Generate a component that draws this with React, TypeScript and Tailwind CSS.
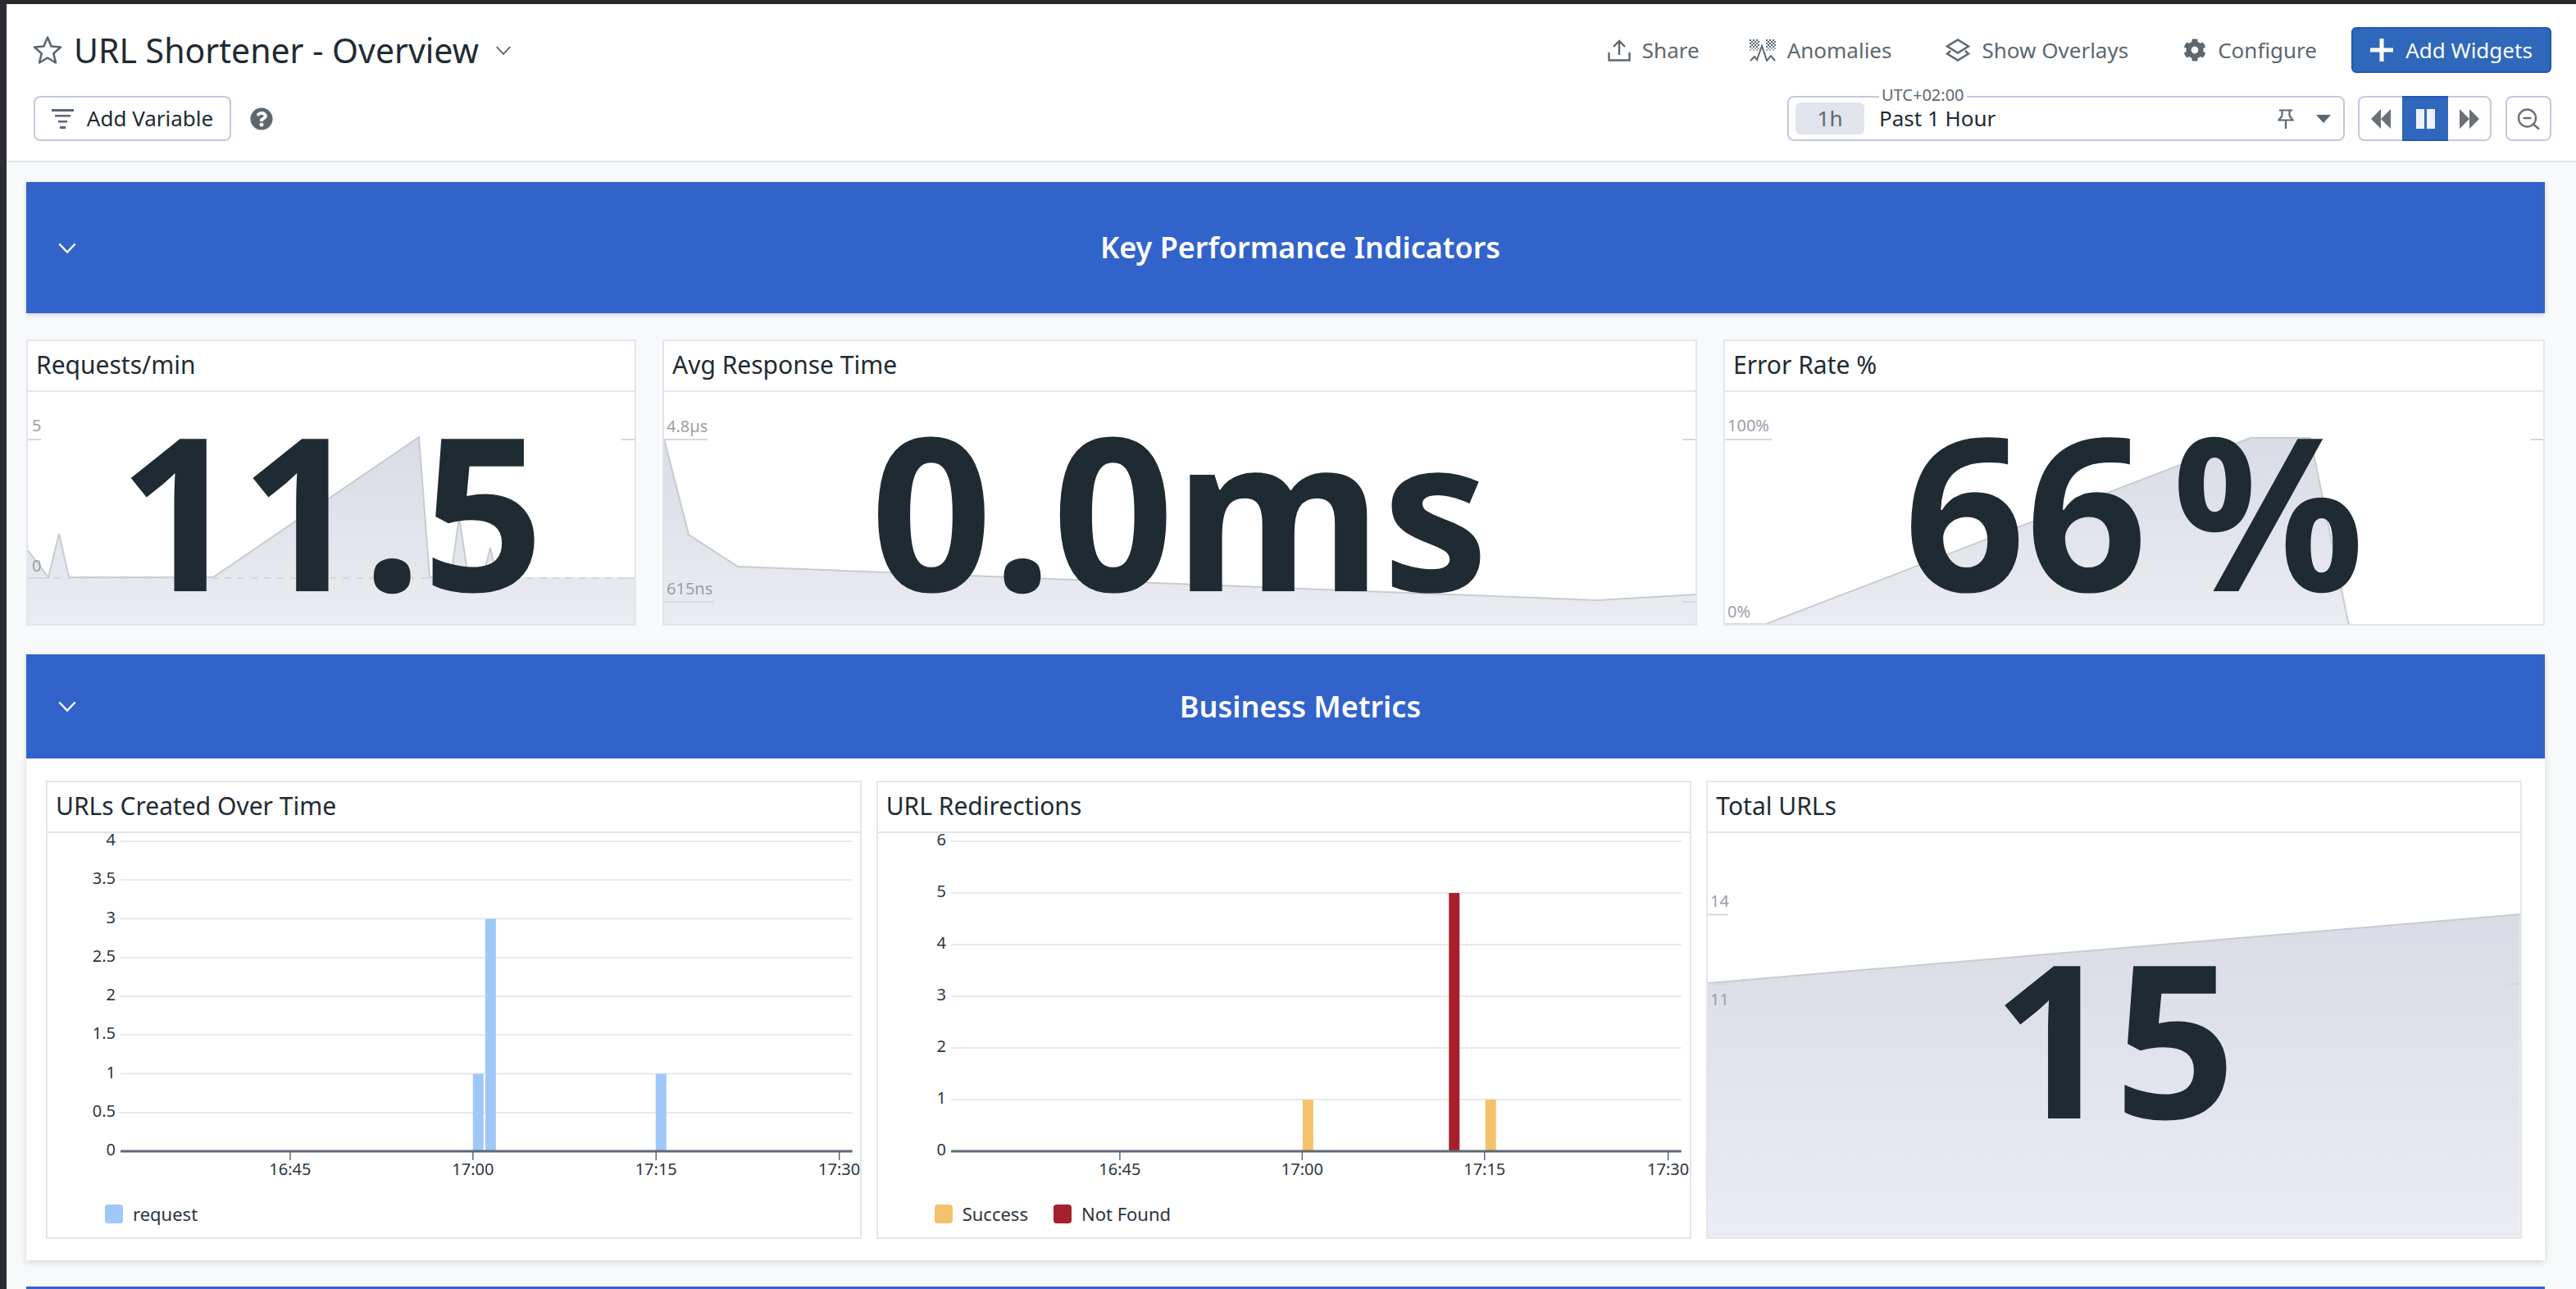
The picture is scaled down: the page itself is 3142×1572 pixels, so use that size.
import React from "react";
import { FaCog, FaQuestionCircle } from "react-icons/fa";

const Chevron = ({ className }: { className: string }) => (
  <svg viewBox="0 0 24 14" className={className} fill="none" stroke="currentColor" strokeWidth="2.4">
    <path d="M1.5 1.5 12 12.5 22.5 1.5" />
  </svg>
);

const ActionLink = ({ icon, label }: { icon: React.ReactNode; label: string }) => (
  <div className="flex items-center gap-[14px] text-[#5c6770] text-[26px] leading-none">
    {icon}
    <span>{label}</span>
  </div>
);

const ShareIcon = () => (
  <svg viewBox="0 0 28 27" className="w-[28px] h-[27px]" fill="none" stroke="#5c6770" strokeWidth="2.4">
    <path d="M14 19V2M7 9l7-7 7 7M1.5 16v9.5h25V16" />
  </svg>
);

const AnomalyIcon = () => (
  <svg viewBox="0 0 32 27" className="w-[32px] h-[27px]" fill="#5c6770">
    {[0, 1, 2, 3, 4, 5, 6, 7, 8, 9, 10, 11, 12, 13, 14, 15].map((c) =>
      [0, 1, 2, 3, 4, 5, 6].map((r) =>
        (c + r) % 2 === 0 && (c < 6 || c > 9) && r * 2 < 14 ? (
          <rect key={`${c}-${r}`} x={c * 2} y={r * 2} width="2" height="2" opacity={r > 4 ? 0.55 : 1} />
        ) : null
      )
    )}
    <path d="M1 26 6 21l3 4 6-17 6 18 5-6 5 6" fill="none" stroke="#5c6770" strokeWidth="2" />
  </svg>
);

const OverlayIcon = () => (
  <svg viewBox="0 0 30 28" className="w-[30px] h-[28px]" fill="none" stroke="#5c6770" strokeWidth="2.4">
    <path d="M15 1.5 28 9.5 15 17.5 2 9.5ZM6 15 2 18.5 15 26.5 28 18.5 24 15" />
  </svg>
);

const Header = () => (
  <header className="shrink-0 bg-white border-b-2 border-[#e1e4ec] pt-[28px] pb-[24px] pl-[32px] pr-[30px] flex flex-col gap-[28px]">
    <div className="flex items-center justify-between h-[56px]">
      <div className="flex items-center">
        <svg viewBox="0 0 36 36" className="w-[36px] h-[36px]" fill="none" stroke="#5c6770" strokeWidth="2.6" strokeLinejoin="round">
          <path d="M18 2.5 22.6 13.5 34 14.5 25.3 22.2 28 33.5 18 27.5 8 33.5 10.7 22.2 2 14.5 13.4 13.5Z" />
        </svg>
        <h1 className="ml-[14px] text-[41px] leading-none font-normal text-[#1f2b33]">URL Shortener - Overview</h1>
        <Chevron className="ml-[20px] w-[20px] h-[11px] text-[#5c6770]" />
      </div>
      <div className="flex items-center">
        <ActionLink icon={<ShareIcon />} label="Share" />
        <div className="ml-[61px]"><ActionLink icon={<AnomalyIcon />} label="Anomalies" /></div>
        <div className="ml-[66px]"><ActionLink icon={<OverlayIcon />} label="Show Overlays" /></div>
        <div className="ml-[67px]"><ActionLink icon={<FaCog className="w-[28px] h-[28px]" />} label="Configure" /></div>
        <button className="ml-[42px] w-[244px] h-[56px] rounded-[6px] bg-[#2f68bb] border-2 border-[#2456b8] text-white text-[26px] flex items-center justify-center gap-[15px]">
          <svg viewBox="0 0 28 28" className="w-[28px] h-[28px]" fill="#fff"><path d="M11.5 0h5v11.5H28v5H16.5V28h-5V16.5H0v-5h11.5Z" /></svg>
          <span>Add Widgets</span>
        </button>
      </div>
    </div>
    <div className="flex items-center justify-between h-[55px]">
      <div className="flex items-center">
        <button className="ml-px w-[241px] h-[55px] rounded-[8px] border-2 border-[#c5c8de] bg-white flex items-center justify-center gap-[15px] text-[26px] text-[#1f2b33]">
          <svg viewBox="0 0 28 24" className="w-[28px] h-[24px]" fill="#5c6770">
            <rect x="0" y="0" width="27" height="3" /><rect x="4" y="7" width="19" height="2.5" />
            <rect x="8" y="14" width="11" height="2.5" /><rect x="10" y="21" width="7" height="3" />
          </svg>
          <span>Add Variable</span>
        </button>
        <FaQuestionCircle className="ml-[23px] w-[28px] h-[28px] text-[#5c6770]" />
      </div>
      <div className="flex items-center">
        <div className="relative w-[680px] h-[55px] rounded-[8px] border-2 border-[#c5c8de] bg-white flex items-center pl-[8px] pr-[15px]">
          <span className="absolute left-[110px] -top-[14px] bg-white px-[3px] text-[20px] leading-[22px] text-[#5c6770]">UTC+02:00</span>
          <div className="w-[84px] h-[39px] rounded-[6px] bg-[#e1e4ec] flex items-center justify-center text-[26px] text-[#5c6770]">1h</div>
          <span className="ml-[18px] text-[26px] text-[#1f2b33] flex-1">Past 1 Hour</span>
          <svg viewBox="0 0 20 24" className="w-[20px] h-[24px]" fill="none" stroke="#5c6770" strokeWidth="2.2">
            <path d="M2 1.5H18M5.5 1.5V8M14.5 1.5V8M5.5 8 1.5 13.5H18.5L14.5 8M10 13.5V24" />
          </svg>
          <svg viewBox="0 0 18 10" className="ml-[27px] w-[18px] h-[10px]" fill="#5c6770"><path d="M0 0h18L9 10Z" /></svg>
        </div>
        <div className="ml-[16px] w-[163px] h-[55px] rounded-[8px] border-2 border-[#c5c8de] bg-white flex items-center">
          <div className="w-[52px] flex justify-center">
            <svg viewBox="0 0 24 24" className="w-[24px] h-[24px]" fill="#6b7076"><path d="M12 0v24L0 12ZM24 0v24L12 12Z" /></svg>
          </div>
          <div className="w-[56px] h-[55px] -my-[2px] bg-[#2f68bb] border-y-2 border-[#2456b8] flex items-center justify-center gap-[3px]">
            <div className="w-[10px] h-[24px] bg-[#eef1f8]" /><div className="w-[10px] h-[24px] bg-[#eef1f8]" />
          </div>
          <div className="flex-1 flex justify-center">
            <svg viewBox="0 0 24 24" className="w-[24px] h-[24px]" fill="#6b7076"><path d="M0 0v24l12-12ZM12 0v24l12-12Z" /></svg>
          </div>
        </div>
        <div className="ml-[17px] w-[56px] h-[55px] rounded-[8px] border-2 border-[#c5c8de] bg-white flex items-center justify-center">
          <svg viewBox="0 0 28 26" className="w-[28px] h-[26px]" fill="none" stroke="#6b7076" strokeWidth="2.4">
            <circle cx="12.5" cy="12" r="10.5" /><path d="M7.5 12h10M20 19.5l7 6" />
          </svg>
        </div>
      </div>
    </div>
  </header>
);

const Band = ({ title, className }: { title: string; className: string }) => (
  <div className={`shrink-0 bg-[#3163cb] flex items-center pl-[38px] text-white shadow-[0_2px_6px_rgba(0,0,0,0.15)] ${className}`}>
    <Chevron className="w-[24px] h-[13px]" />
    <div className="flex-1 text-center pr-[26px] text-[36px] font-semibold">{title}</div>
  </div>
);

const Card = ({ title, children }: { title: string; children: React.ReactNode }) => (
  <div className="min-w-0 flex flex-col bg-white border-2 border-[#e4e6ed]">
    <div className="shrink-0 h-[62px] border-b-2 border-[#e4e6ed] pl-[10px] pb-[3px] flex items-center text-[30px] text-[#1f2b33]">{title}</div>
    <div className="relative flex-1 min-h-0">{children}</div>
  </div>
);

const BigNumber = ({ children }: { children: React.ReactNode }) => (
  <div className="absolute inset-0 flex items-center justify-center text-[260px] leading-none font-bold text-[#1f2b33]">
    {children}
  </div>
);

const Spark = ({
  id, box, area, line, ticks, labels, dashed,
}: {
  id: string;
  box: string;
  area: string;
  line: string;
  ticks: [number, number, number][];
  labels: [string, number, number][];
  dashed?: number;
}) => (
  <svg viewBox={box} preserveAspectRatio="none" className="absolute inset-0 w-full h-full">
    <defs>
      <linearGradient id={id} x1="0" y1="0" x2="0" y2="1">
        <stop offset="0" stopColor="#d9dce4" />
        <stop offset="1" stopColor="#eaecf1" />
      </linearGradient>
    </defs>
    <path d={area} fill={`url(#${id})`} />
    <path d={line} fill="none" stroke="#c6cbd5" strokeWidth="2" />
    {dashed ? <path d={`M34 ${dashed}H774`} stroke="#d4d7df" strokeWidth="2" strokeDasharray="8 8" /> : null}
    {ticks.map(([x1, x2, y]) => (
      <path key={`${x1}-${y}`} d={`M${x1} ${y}H${x2}`} stroke="#d5d8e0" strokeWidth="2" />
    ))}
    {labels.map(([t, x, y]) => (
      <text key={t} x={x} y={y} fontSize="20" fill="#9a9fa8" dominantBaseline="middle">{t}</text>
    ))}
  </svg>
);

const BarChart = ({
  box, x0, x1, ys, ticks, bars, offset,
}: {
  box: string;
  x0: number;
  x1: number;
  ys: [string, number][];
  ticks: [string, number][];
  bars: [number, number, number, string][];
  offset: number;
}) => (
  <svg viewBox={box} className="w-full h-full overflow-visible">
    {ys.slice(0, -1).map(([l, y]) => (
      <path key={l} d={`M${x0} ${y}H${x1}`} stroke="#e9eaee" strokeWidth="2" />
    ))}
    {bars.map(([x, w, top, c]) => (
      <rect key={x} x={x} y={top} width={w} height={1404 - top} fill={c} />
    ))}
    <path d={`M${x0} 1404H${x1}`} stroke="#5f6675" strokeWidth="3" />
    {ys.map(([l, y]) => (
      <text key={l} x={x0 - offset} y={y} fontSize="20" fill="#2c3540" textAnchor="end" dominantBaseline="middle">{l}</text>
    ))}
    {ticks.map(([l, x]) => (
      <g key={l}>
        <path d={`M${x} 1405V1415`} stroke="#5f6675" strokeWidth="1.5" />
        <text x={x} y={1428} fontSize="20" fill="#2c3540" textAnchor="middle" dominantBaseline="middle">{l}</text>
      </g>
    ))}
  </svg>
);

const LegendItem = ({ color, label }: { color: string; label: string }) => (
  <div className="flex items-center gap-[12px] text-[22px] text-[#2c3540]">
    <div className={`w-[22px] h-[23px] rounded-[4px] ${color}`} />
    <span>{label}</span>
  </div>
);

const Y1: [string, number][] = [["4", 1026], ["3.5", 1073], ["3", 1120.5], ["2.5", 1168], ["2", 1215], ["1.5", 1262], ["1", 1309.5], ["0.5", 1357], ["0", 1404]];
const Y2: [string, number][] = [["6", 1026], ["5", 1089], ["4", 1152], ["3", 1215], ["2", 1278], ["1", 1341], ["0", 1404]];

export default function App() {
  return (
    <div className="w-[3142px] h-[1572px] overflow-hidden flex flex-col bg-[#f8f9fb] font-['Noto_Sans',sans-serif]">
      <div className="shrink-0 h-[5px] bg-[#2a2a2a]" />
      <div className="flex flex-1 min-h-0">
        <div className="shrink-0 w-[8px] bg-[#2a2d36]" />
        <main className="flex-1 min-w-0 flex flex-col">
          <Header />
          <div className="flex-1 min-h-0 pt-[24px] pl-[24px] pr-[38px] flex flex-col">
            <Band title="Key Performance Indicators" className="h-[160px]" />
            <div className="shrink-0 mt-[32px] h-[349px] grid grid-cols-[744px_1262px_1002px] gap-[32px]">
              <Card title="Requests/min">
                <Spark
                  id="g1"
                  box="34 478 740 283"
                  area="M34 671 59 704 72 651 84 704H260L511 533 524 704H550L560 630 571 704H589L598 668 606 704H776V763H34Z"
                  line="M34 671 59 704 72 651 84 704H260L511 533 524 704H550L560 630 571 704H589L598 668 606 704"
                  dashed={705}
                  ticks={[[34, 50, 536], [758, 776, 536], [34, 50, 705], [758, 776, 705]]}
                  labels={[["5", 39, 521], ["0", 39, 692]]}
                />
                <BigNumber>11.5</BigNumber>
              </Card>
              <Card title="Avg Response Time">
                <Spark
                  id="g2"
                  box="810 478 1258 283"
                  area="M810 535 840 652 900 691 1948 732 2070 725V763H810Z"
                  line="M810 535 840 652 900 691 1948 732 2070 725"
                  ticks={[[810, 863, 536], [810, 870, 734], [2052, 2070, 536], [2052, 2070, 734]]}
                  labels={[["4.8µs", 813, 522], ["615ns", 813, 720]]}
                />
                <BigNumber>0.0ms</BigNumber>
              </Card>
              <Card title="Error Rate %">
                <Spark
                  id="g3"
                  box="2104 478 998 283"
                  area="M2154 761 2745 534H2818L2865 763H2154Z"
                  line="M2154 761 2745 534H2818L2865 763"
                  ticks={[[2104, 2161, 536], [3086, 3104, 536], [2104, 2154, 761]]}
                  labels={[["100%", 2107, 521], ["0%", 2107, 748]]}
                />
                <BigNumber>66<span className="ml-[30px]">%</span></BigNumber>
              </Card>
            </div>
            <Band title="Business Metrics" className="mt-[35px] h-[127px]" />
            <div className="shrink-0 h-[612px] bg-white pt-[27px] pb-[26px] pl-[24px] pr-[28px] grid grid-cols-3 gap-[18px] shadow-[0_2px_8px_rgba(0,0,0,0.15)]">
              <Card title="URLs Created Over Time">
                <div className="flex flex-col h-full">
                  <div className="h-[440px] shrink-0">
                    <BarChart
                      box="58 1016 991 440"
                      x0={147} x1={1040} ys={Y1} offset={6}
                      ticks={[["16:45", 354], ["17:00", 577], ["17:15", 800.5], ["17:30", 1024]]}
                      bars={[[577, 13, 1309.5, "#9fc8f8"], [592, 13, 1120.5, "#9fc8f8"], [800, 13, 1309.5, "#9fc8f8"]]}
                    />
                  </div>
                  <div className="pl-[70px] pt-[8px]"><LegendItem color="bg-[#9fc8f8]" label="request" /></div>
                </div>
              </Card>
              <Card title="URL Redirections">
                <div className="flex flex-col h-full">
                  <div className="h-[440px] shrink-0">
                    <BarChart
                      box="1071 1016 991 440"
                      x0={1160} x1={2051} ys={Y2} offset={6}
                      ticks={[["16:45", 1366], ["17:00", 1588.5], ["17:15", 1811], ["17:30", 2035]]}
                      bars={[[1589, 13, 1341, "#f5c26b"], [1767.5, 13, 1089, "#a51f2d"], [1812, 13, 1341, "#f5c26b"]]}
                    />
                  </div>
                  <div className="pl-[69px] pt-[8px] flex gap-[31px]">
                    <LegendItem color="bg-[#f5c26b]" label="Success" />
                    <LegendItem color="bg-[#a51f2d]" label="Not Found" />
                  </div>
                </div>
              </Card>
              <Card title="Total URLs">
                <Spark
                  id="g4"
                  box="2083 1016 991 493"
                  area="M2083 1199 3074 1115V1509H2083Z"
                  line="M2083 1199 3074 1115"
                  ticks={[[2083, 2108, 1115.5], [2083, 2108, 1200], [3058, 3074, 1200]]}
                  labels={[["14", 2086, 1101], ["11", 2086, 1221]]}
                />
                <BigNumber>15</BigNumber>
              </Card>
            </div>
            <div className="shrink-0 mt-[32px] h-[40px] bg-[#3163cb]" />
          </div>
        </main>
      </div>
    </div>
  );
}
